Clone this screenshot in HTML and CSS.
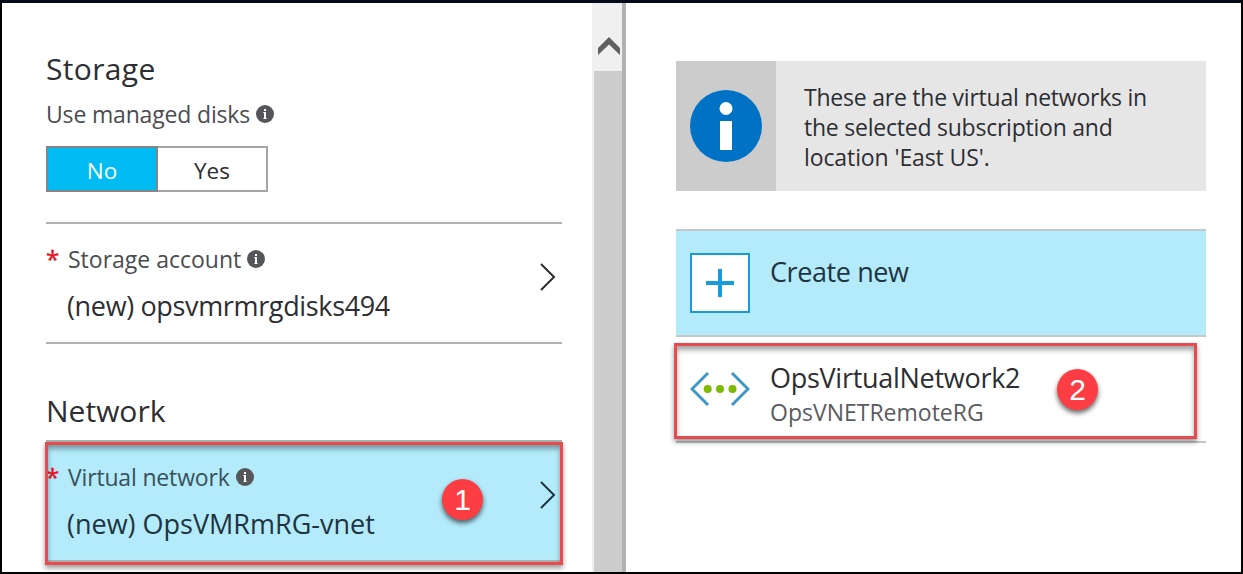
FILE: index.html
```html
<!DOCTYPE html>
<html lang="en">
<head>
<meta charset="utf-8">
<title>Virtual network</title>
<link rel="stylesheet" href="styles.css">
</head>
<body>
<svg class="defs" width="0" height="0">
  <symbol id="info" viewBox="0 0 18 18">
    <circle cx="9" cy="9" r="9" fill="#55565a"/>
    <rect x="8" y="4" width="2" height="2" fill="#fff"/>
    <path d="M7.3 7H10v6h.6v1H7.4v-1H8V8h-.7z" fill="#fff"/>
  </symbol>
  <symbol id="chevron" viewBox="0 0 18 30">
    <path d="M2 2L15 15L2 28" fill="none" stroke="currentColor" stroke-width="2"/>
  </symbol>
</svg>
<div class="frame">
  <main class="settings">
    <h2 class="heading heading-storage"><span>Storage</span></h2>
    <div class="label disks-label"><span class="t-disks">Use managed disks</span><svg class="info"><use href="#info"/></svg></div>
    <div class="toggle"><div class="option on">No</div><div class="option">Yes</div></div>
    <section class="field">
      <div class="label"><span class="star">*</span><span class="t-account">Storage account</span><svg class="info"><use href="#info"/></svg></div>
      <div class="value"><span class="t-account-value">(new) opsvmrmrgdisks494</span></div>
      <svg class="chevron"><use href="#chevron"/></svg>
    </section>
    <h2 class="heading heading-network"><span>Network</span></h2>
    <section class="field selected">
      <div class="label"><span class="star">*</span><span class="t-vnet">Virtual network</span><svg class="info"><use href="#info"/></svg></div>
      <div class="value"><span class="t-vnet-value">(new) OpsVMRmRG-vnet</span></div>
      <svg class="chevron"><use href="#chevron"/></svg>
    </section>
  </main>
  <div class="scrollbar">
    <svg class="scroll-up" width="22" height="18" viewBox="0 0 22 18"><path d="M0 11L11 0L22 11V18L11 7.5L0 18z" fill="#606060"/></svg>
    <div class="thumb"></div>
  </div>
  <aside class="networks">
    <div class="notice">
      <div class="notice-icon">
        <svg width="72" height="72" viewBox="0 0 72 72"><circle cx="36" cy="36" r="36" fill="#0072c6"/><circle cx="36" cy="18.5" r="6.5" fill="#fff"/><rect x="30" y="31" width="12" height="29" fill="#fff"/></svg>
      </div>
      <p class="notice-text"><span>These are the virtual networks in</span><br><span>the selected subscription and</span><br><span class="notice-last">location 'East US'.</span></p>
    </div>
    <div class="row create">
      <svg class="plus" width="60" height="60" viewBox="0 0 60 60"><rect x="1" y="1" width="58" height="58" fill="#fff" stroke="#179bdc" stroke-width="2"/><path d="M16 30H44M30 16V44" stroke="#179bdc" stroke-width="4"/></svg>
      <div class="name t-create">Create new</div>
    </div>
    <div class="row network">
      <svg class="vnet" width="60" height="36" viewBox="0 0 60 36"><path d="M18 2L2 18L18 34M42 2L58 18L42 34" fill="none" stroke="#3f97c6" stroke-width="3"/><g fill="#7fba00"><circle cx="17.7" cy="18" r="4"/><circle cx="30" cy="18" r="4"/><circle cx="42.5" cy="18" r="4"/></g></svg>
      <div><div class="name t-name">OpsVirtualNetwork2</div><div class="sub"><span class="t-sub">OpsVNETRemoteRG</span></div></div>
    </div>
  </aside>
  <div class="mark mark-1"></div>
  <div class="mark mark-2"></div>
  <div class="badge badge-1">1</div>
  <div class="badge badge-2">2</div>
</div>
</body>
</html>
```
FILE: styles.css
```css
* { box-sizing: border-box; }
body { margin: 0; font-family: "Open Sans", "Noto Sans", sans-serif; color: #2d2e32; }
.defs { position: absolute; }
.frame { position: relative; display: flex; width: 1243px; height: 574px; border: 2px solid #000; border-top: 3px solid #030a18; overflow: hidden; background: #fff; }
.settings { width: 590px; padding: 45px 30px 0 44px; }
.heading { margin: 0; font-size: 30px; font-weight: 400; line-height: 42px; height: 40px; }
.heading-storage { letter-spacing: .35px; }
.label { display: flex; align-items: center; height: 32px; font-size: 23px; line-height: 32px; color: #4b4c50; white-space: nowrap; }
.disks-label { margin-top: 10px; }
.t-disks { letter-spacing: -.17px; }
.t-vnet { letter-spacing: -.17px; }
.info { width: 18px; height: 18px; margin-left: 6px; }
.toggle { display: flex; width: 222px; height: 46px; margin-top: 16px; border: 2px solid #a6a6a6; }
.option { flex: 1; text-align: center; font-size: 22.5px; line-height: 44px; padding-top: 1px; }
.option.on { flex: none; width: 112px; margin: -2px 0 -2px -2px; padding-top: 1px; border: 2px solid #858585; background: #00bcf2; color: #fff; }
.field { position: relative; height: 122px; margin-top: 30px; padding-top: 19px; border-top: 2px solid #b1b1b1; border-bottom: 2px solid #b1b1b1; }
.field.selected { margin-top: 11px; background: #b3ebfb; color: #1f3340; }
.selected .label { color: #3b505a; }
.star { width: 22px; font-size: 24px; -webkit-text-stroke: .5px #e81123; color: #e81123; }
.value { height: 40px; margin-top: 10px; padding-left: 21px; font-size: 27px; line-height: 42px; white-space: nowrap; }
.t-account-value { letter-spacing: -.35px; }
.chevron { position: absolute; right: 5px; top: 38px; width: 18px; height: 30px; }
.heading-network { margin-top: 45px; line-height: 43px; }
.scrollbar { width: 34px; padding-left: 2px; background: #f0f0f0; border-right: 4px solid #b1b1b1; display: flex; flex-direction: column; }
.scroll-up { margin: 34px 0 16px 4px; flex: none; }
.thumb { flex: 1; background: #cdcdcd; }
.networks { width: 580px; padding: 58px 0 0 50px; }
.notice { display: flex; height: 130px; background: #e6e6e6; }
.notice-icon { display: flex; align-items: center; justify-content: center; width: 100px; background: #ccc; }
.notice-text { margin: 21px 0 0 28px; font-size: 23px; line-height: 30px; letter-spacing: -.23px; white-space: nowrap; }
.notice-last { letter-spacing: -.1px; }
.row { display: flex; padding-left: 14px; gap: 20px; border-bottom: 2px solid #c4c8ca; }
.create { height: 108px; margin-top: 38px; padding-top: 22px; border-top: 2px solid #c4c8ca; background: #b3ebfb; color: #1f3340; }
.name { font-size: 27px; line-height: 40px; white-space: nowrap; }
.create .name { margin-top: -1px; }
.t-create { letter-spacing: -.4px; }
.t-name { letter-spacing: -.28px; }
.network { height: 106px; padding-top: 21px; }
.vnet { margin-top: 13px; }
.sub { font-size: 23px; line-height: 32px; margin-top: -2px; color: #5a5b5f; white-space: nowrap; }
.networks, .notice, .row { min-width: 0; }
.notice, .row { width: 530px; }
.mark { position: absolute; border: 3px solid #e64b50; box-shadow: 0 3px 5px rgba(0,0,0,.4), inset 0 4px 5px rgba(0,0,0,.35); }
.mark-1 { left: 43px; top: 439px; width: 518px; height: 123px; }
.mark-2 { left: 672px; top: 340px; width: 523px; height: 96px; }
.badge { position: absolute; width: 41px; height: 41px; border-radius: 50%; background: #fc3e44; color: #fff; text-align: center; font: 30px/41px "Liberation Sans", Arial, sans-serif; box-shadow: 0 3px 5px rgba(0,0,0,.6); }
.badge-1 { left: 440px; top: 476px; }
.badge-2 { left: 1055px; top: 366px; }
```
